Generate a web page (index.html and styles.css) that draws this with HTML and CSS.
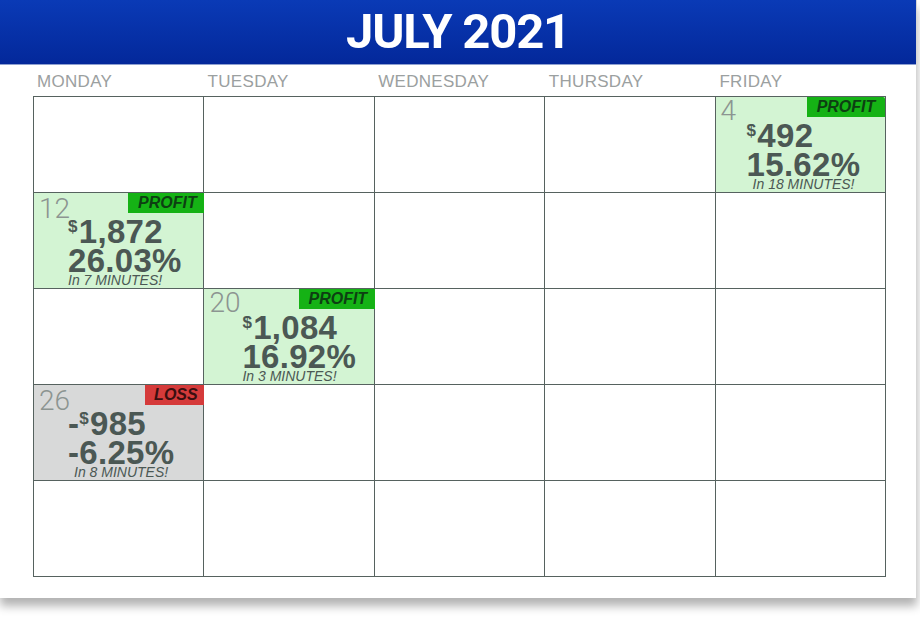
FILE: index.html
```html
<!DOCTYPE html>
<html>
<head>
<meta charset="utf-8">
<link rel="stylesheet" href="styles.css">
</head>
<body>
<div class="paper">
  <header class="header"><h1 class="title">JULY 2021</h1></header>
  <div class="days">
    <div class="day">MONDAY</div>
    <div class="day">TUESDAY</div>
    <div class="day">WEDNESDAY</div>
    <div class="day">THURSDAY</div>
    <div class="day">FRIDAY</div>
  </div>
  <div class="grid">
    <div class="cell"></div>
    <div class="cell"></div>
    <div class="cell"></div>
    <div class="cell"></div>
    <div class="cell profit">
      <span class="badge badge-profit">PROFIT</span>
      <div class="num">4</div>
      <div class="stats stats-fri">
        <div class="amt"><span class="cur">$</span>492</div>
        <div class="pct">15.62%</div>
        <div class="mins mins-shift">In 18 MINUTES!</div>
      </div>
    </div>

    <div class="cell profit">
      <span class="badge badge-profit badge-over">PROFIT</span>
      <div class="num num-mon">12</div>
      <div class="stats stats-mon">
        <div class="amt"><span class="cur">$</span>1,872</div>
        <div class="pct">26.03%</div>
        <div class="mins">In 7 MINUTES!</div>
      </div>
    </div>
    <div class="cell"></div>
    <div class="cell"></div>
    <div class="cell"></div>
    <div class="cell"></div>

    <div class="cell"></div>
    <div class="cell profit">
      <span class="badge badge-profit badge-over">PROFIT</span>
      <div class="num">20</div>
      <div class="stats stats-tue">
        <div class="amt"><span class="cur">$</span>1,084</div>
        <div class="pct">16.92%</div>
        <div class="mins">In 3 MINUTES!</div>
      </div>
    </div>
    <div class="cell"></div>
    <div class="cell"></div>
    <div class="cell"></div>

    <div class="cell loss">
      <span class="badge badge-loss badge-over">LOSS</span>
      <div class="num num-mon">26</div>
      <div class="stats stats-mon">
        <div class="amt">-<span class="cur">$</span>985</div>
        <div class="pct">-6.25%</div>
        <div class="mins mins-shift">In 8 MINUTES!</div>
      </div>
    </div>
    <div class="cell"></div>
    <div class="cell"></div>
    <div class="cell"></div>
    <div class="cell"></div>

    <div class="cell"></div>
    <div class="cell"></div>
    <div class="cell"></div>
    <div class="cell"></div>
    <div class="cell"></div>
  </div>
</div>
</body>
</html>
```

FILE: styles.css
```css
* { box-sizing: border-box; }
html, body {
  margin: 0;
  padding: 0;
  background: #ffffff;
}
body {
  width: 920px;
  height: 619px;
  overflow: hidden;
  font-family: "Liberation Sans", Arial, sans-serif;
}
.paper {
  width: 917px;
  height: 598px;
  background: #ffffff;
  border-right: 1px solid #d6d6d6;
  box-shadow: 0 8px 9px rgba(0, 0, 0, 0.3);
}
.header {
  height: 65px;
  background: linear-gradient(#0a3ab6, #03289a);
  border-bottom: 1px solid #8ea0d0;
  text-align: center;
}
.title {
  margin: 0;
  font-family: Roboto, "Liberation Sans", sans-serif;
  font-weight: 700;
  font-size: 49px;
  line-height: 63px;
  letter-spacing: -1.2px;
  color: #ffffff;
}
.days {
  display: grid;
  grid-template-columns: repeat(5, 1fr);
  width: 853px;
  margin-left: 33px;
  height: 31px;
}
.day {
  padding-left: 4px;
  padding-top: 7px;
  font-size: 17px;
  line-height: 20px;
  letter-spacing: 0.3px;
  color: #9ba0a0;
}
.grid {
  display: grid;
  grid-template-columns: repeat(5, 1fr);
  grid-auto-rows: 95px;
  gap: 1px;
  padding: 1px;
  width: 853px;
  margin-left: 33px;
  background: #56625f;
}
.cell {
  position: relative;
  background: #ffffff;
  padding: 4px 0 0 5px;
}
.cell.profit { background: #d3f4d3; }
.cell.loss { background: #d8d9d9; }
.num {
  font-family: Roboto, "Liberation Sans", sans-serif;
  font-weight: 300;
  font-size: 28px;
  line-height: 20px;
  height: 20px;
  color: #8c9491;
}
.num-mon { padding-top: 2px; }
.stats {
  margin-left: 26px;
  color: #4b5854;
  font-weight: 700;
}
.stats-mon { margin-left: 29px; }
.stats-tue { margin-left: 33px; }
.amt, .pct {
  font-size: 33px;
  line-height: 29px;
  letter-spacing: 0.3px;
}
.cur {
  font-size: 17px;
  line-height: 0;
  vertical-align: 11px;
  margin-right: 1px;
}
.mins {
  margin-top: -2px;
  font-size: 14px;
  line-height: 14px;
  font-style: italic;
  font-weight: 400;
  color: #4b5854;
}
.mins-shift { padding-left: 6px; }
.badge {
  position: absolute;
  top: 0;
  right: 0;
  height: 20px;
  font-size: 16px;
  line-height: 20px;
  font-weight: 700;
  font-style: italic;
  text-align: center;
}
.badge-profit {
  width: 78px;
  background: #15b215;
  color: #0d3f12;
  border-top-right-radius: 2px;
}
.badge-loss {
  width: 61px;
  background: #d53a3a;
  color: #3a0f10;
}
.badge-over { right: -3px; }
```
